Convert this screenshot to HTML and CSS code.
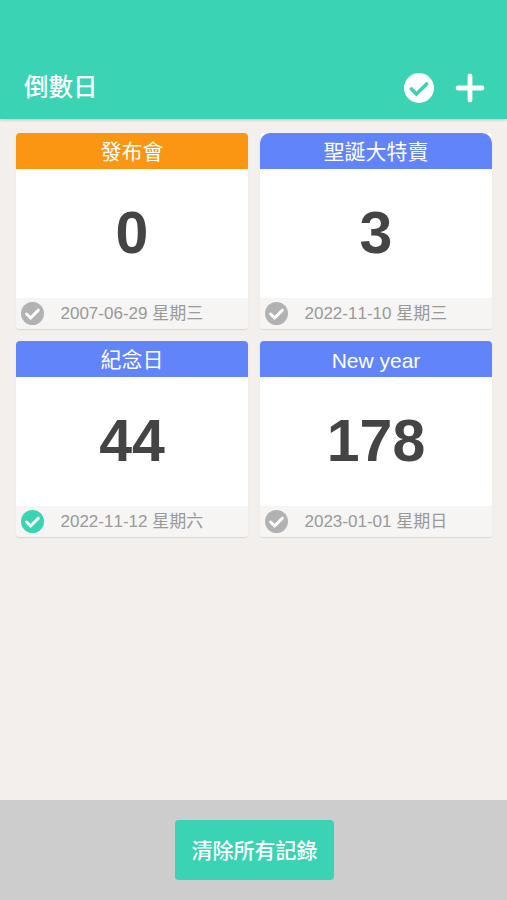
FILE: index.html
```html
<!DOCTYPE html>
<html lang="zh-Hant">
<head>
<meta charset="utf-8">
<title>倒數日</title>
<link rel="stylesheet" href="styles.css">
</head>
<body>
<header class="bar">
  <h1>倒數日</h1>
  <svg class="check-all" viewBox="0 0 30 30"><circle cx="15" cy="15" r="15" fill="#fff"/><path d="M7.4 16l5 5L22.6 11" fill="none" stroke="#3ad3b3" stroke-width="3.6" stroke-linecap="round"/></svg>
  <svg class="plus" viewBox="0 0 30 30"><path d="M15 3v24M3 15h24" stroke="#fff" stroke-width="4.8" stroke-linecap="round"/></svg>
</header>
<main class="grid">
  <article class="card orange">
    <h2>發布會</h2><div class="days">0</div>
    <footer><svg class="tick" viewBox="0 0 24 24"><circle cx="12" cy="12" r="12"/><path d="M5.8 12.6l4.2 4 8.2-8.1"/></svg><span>2007-06-29 星期三</span></footer>
  </article>
  <article class="card rounded">
    <h2>聖誕大特賣</h2><div class="days">3</div>
    <footer><svg class="tick" viewBox="0 0 24 24"><circle cx="12" cy="12" r="12"/><path d="M5.8 12.6l4.2 4 8.2-8.1"/></svg><span>2022-11-10 星期三</span></footer>
  </article>
  <article class="card">
    <h2>紀念日</h2><div class="days">44</div>
    <footer><svg class="tick on" viewBox="0 0 24 24"><circle cx="12" cy="12" r="12"/><path d="M5.8 12.6l4.2 4 8.2-8.1"/></svg><span>2022-11-12 星期六</span></footer>
  </article>
  <article class="card">
    <h2 class="latin">New year</h2><div class="days">178</div>
    <footer><svg class="tick" viewBox="0 0 24 24"><circle cx="12" cy="12" r="12"/><path d="M5.8 12.6l4.2 4 8.2-8.1"/></svg><span>2023-01-01 星期日</span></footer>
  </article>
</main>
<div class="bottom"><button>清除所有記錄</button></div>
</body>
</html>
```
FILE: styles.css
```css
* { box-sizing: border-box; margin: 0; }
body {
  height: 900px; display: flex; flex-direction: column; background: #f3efec;
  font-family: "Liberation Sans", "Noto Sans CJK TC", sans-serif;
}
.bar {
  height: 119px; padding: 56px 22px 0 24px; display: flex; align-items: center;
  background: #3ad3b3; box-shadow: 0 1px 3px rgba(0,0,0,.2);
}
h1 { flex: 1; font-size: 24.5px; font-weight: 500; line-height: 36px; color: #fff; }
.check-all { width: 30px; height: 30px; margin-right: 21px; }
.plus { width: 30px; height: 30px; }
.grid {
  flex: 1; padding: 14px 15px 0 16px; display: grid; gap: 12px;
  grid-template-columns: 1fr 1fr; grid-auto-rows: 196px; align-content: start;
}
.card {
  display: flex; flex-direction: column; background: #fff; border-radius: 4px;
  box-shadow: 0 1px 1px rgba(0,0,0,.12);
}
h2 {
  height: 36px; background: #6284fb; color: #fff; font-size: 21px; border-radius: 4px 4px 0 0;
  font-weight: 400; line-height: 37px; text-align: center;
}
.latin { line-height: 39px; }
.rounded h2 { border-radius: 10px 10px 0 0; }
.orange h2 { background: #fb9613; }
.days {
  flex: 1; display: flex; align-items: center; justify-content: center;
  font-size: 59px; font-weight: 700; line-height: 1; color: #444;
}
footer {
  height: 31px; padding: 0 0 0 5px; display: flex; align-items: center;
  background: #f6f5f4; color: #999; font-size: 17px; white-space: nowrap;
  font-kerning: none; border-radius: 0 0 4px 4px;
}
footer span { line-height: 24px; padding-top: 1px; }
.tick { width: 23px; height: 23px; margin-right: 16.5px; fill: #b2b2b2; }
.tick path { fill: none; stroke: #fff; stroke-width: 3; stroke-linecap: round; }
.on { fill: #3ad3b3; }
.bottom {
  height: 100px; padding-left: 2px; display: flex; align-items: center; justify-content: center;
  background: #cdcdcd;
}
button {
  width: 159px; height: 60px; padding: 0 0 2px; border: 0; border-radius: 4px; background: #3ad3b3;
  color: #fff; font: 500 21px "Noto Sans CJK TC", sans-serif;
}
```
